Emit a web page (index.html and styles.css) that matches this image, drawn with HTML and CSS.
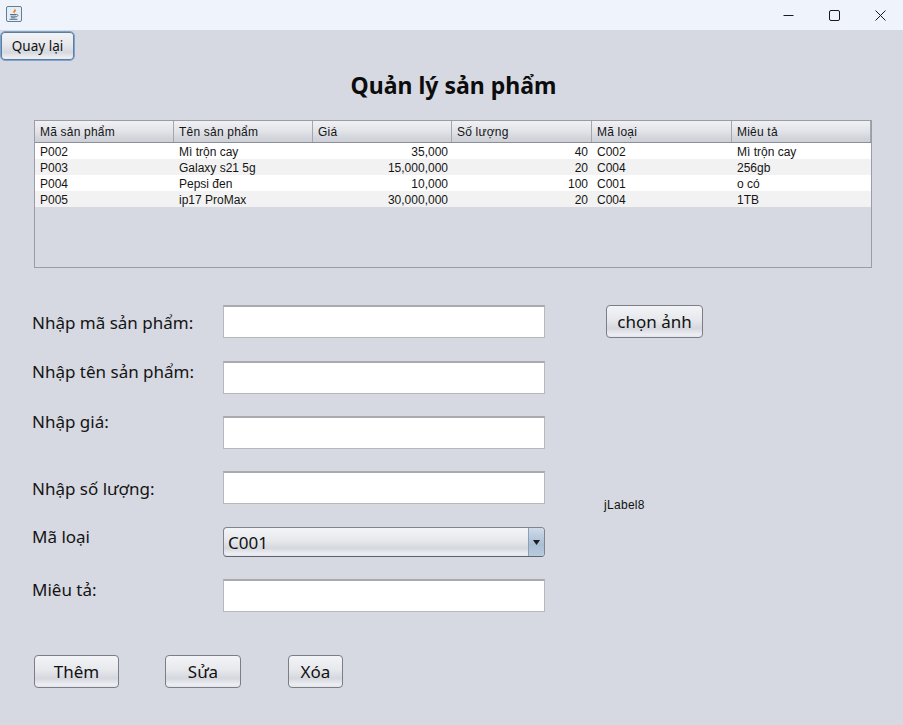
FILE: index.html
```html
<!DOCTYPE html>
<html lang="vi">
<head>
<meta charset="utf-8">
<title>Quản lý sản phẩm</title>
<link rel="stylesheet" href="styles.css">
</head>
<body>
<header class="titlebar">
  <svg class="app-icon" width="16" height="16" viewBox="0 0 16 16">
    <rect x="0.5" y="0.5" width="15" height="15" rx="1.5" fill="#e9eef4" stroke="#5f7f9c"/>
    <path d="M8.6 2.5c.8 1.4-1.9 2.4-1.2 4 .2.5.6.8 1 1-.4-1.2 2-2 1.4-3.400-.2-.6-.7-1.100-1.200-1.600z" fill="#e8761e"/>
    <path d="M4 8.500h6.500M4.500 10.200h5.500M5 11.800h4.500" stroke="#54718c" stroke-width="1" fill="none"/>
    <path d="M10.500 8.500c2 0 1.800 2-.5 2.300M3.500 13.300h8" stroke="#54718c" stroke-width="1" fill="none"/>
  </svg>
  <div class="window-controls">
    <svg width="11" height="11" viewBox="0 0 11 11"><path d="M0.500 5.500h10" stroke="#1a1a1a" fill="none"/></svg>
    <svg width="11" height="11" viewBox="0 0 11 11"><rect x="0.500" y="0.500" width="10" height="10" rx="1.500" stroke="#1a1a1a" fill="none"/></svg>
    <svg width="11" height="11" viewBox="0 0 11 11"><path d="M0.500 0.500l10 10M10.500 0.500l-10 10" stroke="#1a1a1a" fill="none"/></svg>
  </div>
</header>
<main class="content">
  <button class="btn btn-back" type="button">Quay lại</button>
  <h1 class="title">Quản lý sản phẩm</h1>
  <section class="table-wrap">
    <div class="table-row table-head">
      <div class="cell">Mã sản phẩm</div>
      <div class="cell">Tên sản phẩm</div>
      <div class="cell">Giá</div>
      <div class="cell">Số lượng</div>
      <div class="cell">Mã loại</div>
      <div class="cell">Miêu tả</div>
    </div>
    <div class="table-row">
      <div class="cell">P002</div><div class="cell">Mì trộn cay</div><div class="cell num">35,000</div><div class="cell num">40</div><div class="cell">C002</div><div class="cell">Mì trộn cay</div>
    </div>
    <div class="table-row alt">
      <div class="cell">P003</div><div class="cell">Galaxy s21 5g</div><div class="cell num">15,000,000</div><div class="cell num">20</div><div class="cell">C004</div><div class="cell">256gb</div>
    </div>
    <div class="table-row">
      <div class="cell">P004</div><div class="cell">Pepsi đen</div><div class="cell num">10,000</div><div class="cell num">100</div><div class="cell">C001</div><div class="cell">o có</div>
    </div>
    <div class="table-row alt">
      <div class="cell">P005</div><div class="cell">ip17 ProMax</div><div class="cell num">30,000,000</div><div class="cell num">20</div><div class="cell">C004</div><div class="cell">1TB</div>
    </div>
  </section>
  <form class="form">
    <label class="label lift-n1">Nhập mã sản phẩm:</label>
    <div class="field"></div>
    <button class="btn btn-pick" type="button">chọn ảnh</button>

    <label class="label lift-11">Nhập tên sản phẩm:</label>
    <div class="field"></div>

    <label class="label lift-21">Nhập giá:</label>
    <div class="field"></div>

    <label class="label lift-n2">Nhập số lượng:</label>
    <div class="field"></div>
    <div class="small-label">jLabel8</div>

    <label class="label lift-10">Mã loại</label>
    <div class="combo">
      <span class="combo-value">C001</span>
      <span class="combo-arrow"><svg width="7" height="5" viewBox="0 0 7 5"><path d="M0 0h7L3.500 5z" fill="#1c1c1c"/></svg></span>
    </div>

    <label class="label lift-11">Miêu tả:</label>
    <div class="field"></div>
  </form>
  <div class="actions">
    <button class="btn btn-add" type="button">Thêm</button>
    <button class="btn btn-edit" type="button">Sửa</button>
    <button class="btn btn-del" type="button">Xóa</button>
  </div>
</main>
</body>
</html>
```

FILE: styles.css
```css
* { box-sizing: border-box; }
html, body { margin: 0; height: 100%; }
body {
  width: 903px;
  height: 725px;
  overflow: hidden;
  background: #d6d9e1;
  font-family: "Noto Sans", sans-serif;
  color: #111;
  display: flex;
  flex-direction: column;
}
.titlebar {
  height: 30px;
  flex: none;
  background: #eff3fb;
  display: flex;
  align-items: center;
  justify-content: space-between;
  padding: 0 17px 2px 6px;
}
.window-controls { display: flex; gap: 35px; align-items: center; padding-top: 2px; }
.window-controls svg { display: block; }
.app-icon { display: block; }
.content { flex: 1; display: flex; flex-direction: column; align-items: flex-start; padding-top: 1px; }
.btn {
  font-family: "Noto Sans", sans-serif;
  font-size: 17px;
  color: #111;
  padding: 0;
  border: 1px solid #7b7e85;
  border-radius: 4px;
  background: linear-gradient(#f3f4f7 0%, #e6e8ec 45%, #d5d8de 72%, #eceef3 92%, #e3e5ea 100%);
  display: flex;
  align-items: center;
  justify-content: center;
}
.btn-back {
  width: 75px;
  height: 30px;
  font-size: 13.5px;
  border: 1px solid #7ba4d0;
  border-radius: 5px;
  box-shadow: inset 0 0 0 1px #5f7c9c;
}
.title {
  align-self: stretch;
  margin: 10px 0 0 0;
  height: 30px;
  line-height: 28px;
  text-align: center;
  font-family: "Noto Sans", sans-serif;
  font-size: 23px;
  font-weight: 700;
  color: #0c0c0c;
  padding-left: 4px;
}
.table-wrap {
  margin: 19px 0 0 34px;
  width: 838px;
  height: 148px;
  border: 1px solid #9a9da5;
  font-family: "Liberation Sans", sans-serif;
  font-size: 12px;
}
.table-row {
  display: grid;
  grid-template-columns: 139px 139px 139px 140px 140px 139px;
  height: 16px;
  line-height: 18px;
  background: #fff;
}
.table-row.alt { background: #f2f2f2; }
.table-head {
  height: 22px;
  line-height: 22px;
  letter-spacing: 0.2px;
  background: linear-gradient(#f0f1f4 0%, #e1e3e8 50%, #d0d3da 85%, #cdd0d7 100%);
  border-bottom: 1px solid #8b8e97;
}
.table-head .cell { border-right: 1px solid #a3a6ae; }
.cell { padding: 0 4px 0 5px; white-space: nowrap; overflow: hidden; color: #151515; }
.cell.num { text-align: right; }
.form {
  margin: 37px 0 0 32px;
  display: grid;
  grid-template-columns: 191px 322px 61px 97px;
  grid-template-rows: 34px 33px 33px 34px 30px 33px;
  row-gap: 22px;
  align-items: center;
}
.label { grid-column: 1; font-size: 17px; line-height: 22px; color: #141414; white-space: nowrap; }
.lift-n1 { padding-top: 1px; }
.lift-n2 { padding-top: 2px; }
.lift-10 { padding-bottom: 10px; }
.lift-11 { padding-bottom: 11px; }
.lift-21 { padding-bottom: 21px; }
.field {
  grid-column: 2;
  height: 33px;
  align-self: start;
  background: #fff;
  border: 1px solid #b6b8bc;
  border-top: 2px solid #a8aaae;
}
.btn-pick { grid-column: 4; grid-row: 1; width: 97px; height: 33px; align-self: start; }
.small-label {
  grid-column: 3 / 5;
  grid-row: 4;
  font-family: "Liberation Sans", sans-serif;
  font-size: 12px;
  line-height: 14px;
  letter-spacing: 0.3px;
  align-self: end;
  margin: 0 0 -7px 59px;
}
.combo {
  grid-column: 2;
  height: 30px;
  border: 1px solid #7f848d;
  border-bottom-color: #5e636c;
  border-radius: 4px;
  background: linear-gradient(#f3f4f7 0%, #e6e8ec 45%, #d5d8de 72%, #eceef3 92%, #e3e5ea 100%);
  display: flex;
  align-items: center;
  justify-content: space-between;
  overflow: hidden;
}
.combo-value { padding-left: 4px; font-size: 17px; }
.combo-arrow {
  width: 16px;
  height: 100%;
  flex: none;
  display: flex;
  align-items: center;
  justify-content: center;
  border-left: 1px solid #8aa0b8;
  background: linear-gradient(#cfdbe8, #a9bed5 60%, #b9cbdd);
}
.actions { margin: 43px 0 0 34px; display: flex; }
.actions .btn { height: 33px; }
.btn-add { width: 85px; }
.btn-edit { width: 76px; margin-left: 46px; }
.btn-del { width: 55px; margin-left: 47px; }
```
